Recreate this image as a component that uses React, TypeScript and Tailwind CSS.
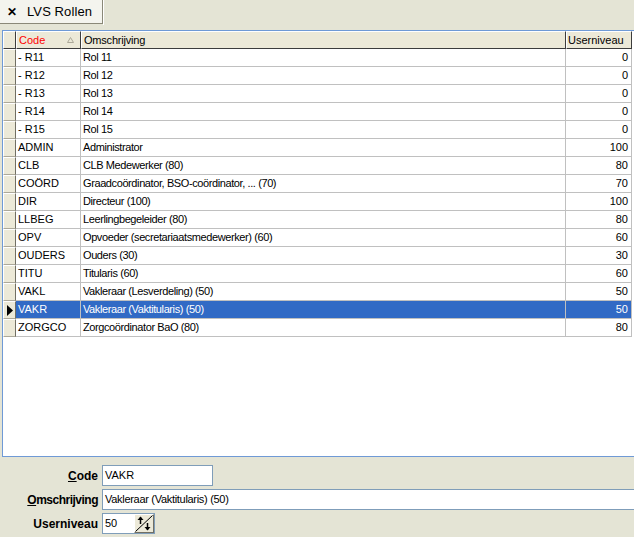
import React from "react";

const rows: [string, string, string][] = [
  ["- R11", "Rol 11", "0"],
  ["- R12", "Rol 12", "0"],
  ["- R13", "Rol 13", "0"],
  ["- R14", "Rol 14", "0"],
  ["- R15", "Rol 15", "0"],
  ["ADMIN", "Administrator", "100"],
  ["CLB", "CLB Medewerker (80)", "80"],
  ["COÖRD", "Graadcoördinator, BSO-coördinator, ... (70)", "70"],
  ["DIR", "Directeur (100)", "100"],
  ["LLBEG", "Leerlingbegeleider (80)", "80"],
  ["OPV", "Opvoeder (secretariaatsmedewerker) (60)", "60"],
  ["OUDERS", "Ouders (30)", "30"],
  ["TITU", "Titularis (60)", "60"],
  ["VAKL", "Vakleraar (Lesverdeling) (50)", "50"],
  ["VAKR", "Vakleraar (Vaktitularis) (50)", "50"],
  ["ZORGCO", "Zorgcoördinator BaO (80)", "80"],
];

const SEL = 14;

function Indicator({ selected }: { selected?: boolean }) {
  return (
    <div className="w-[13px] h-[18px] shrink-0 bg-[#ECE9D8] border-t border-l border-t-white border-l-white border-r border-b border-r-[#716F64] border-b-[#ACA899] flex items-center justify-center">
      {selected && (
        <svg width="6" height="11" viewBox="0 0 6 11">
          <path d="M0 0 L6 5.5 L0 11 Z" fill="#000" />
        </svg>
      )}
    </div>
  );
}

export default function App() {
  return (
    <div
      className="w-[634px] h-[537px] bg-[#E4E4D5] overflow-hidden flex flex-col text-[11px] text-black"
      style={{ fontFamily: '"Liberation Sans", Arial, sans-serif' }}
    >
      {/* Tab bar */}
      <div className="h-[30px] shrink-0 flex items-start">
        <div className="h-[24px] w-[103px] bg-[#F4F4EE] border-r border-b border-r-[#8A8878] border-b-[#8A8878] flex items-center pl-[7px] gap-[10px] text-[13px]">
          <span className="text-[12px] leading-none font-bold">✕</span>
          <span className="leading-none tracking-[0.1px]">LVS Rollen</span>
        </div>
        <div className="w-px h-[25px] bg-white" />
      </div>

      {/* Grid panel */}
      <div className="ml-[2px] h-[427px] shrink-0 border-t border-l border-b border-[#6F9AD6] bg-white flex flex-col overflow-hidden">
        {/* Header */}
        <div className="flex h-[18px] shrink-0">
          <div className="w-[13px] h-[18px] shrink-0 bg-[#ECE9D8] border-t border-l border-t-white border-l-white border-r border-b border-r-[#3C3C3C] border-b-[#3C3C3C]" />
          <div className="w-[65px] h-[18px] shrink-0 bg-[#ECE9D8] border-t border-l border-t-white border-l-white border-r border-b border-r-[#3C3C3C] border-b-[#3C3C3C] flex items-center pl-[2px] pr-[6px] justify-between">
            <span className="text-[#FF0000]">Code</span>
            <svg width="7" height="6" viewBox="0 0 7 6">
              <path d="M3.5 0.5 L6.5 5.5 L0.5 5.5 Z" fill="none" stroke="#ACA899" strokeWidth="1" />
            </svg>
          </div>
          <div className="w-[485px] h-[18px] shrink-0 bg-[#ECE9D8] border-t border-l border-t-white border-l-white border-r border-b border-r-[#3C3C3C] border-b-[#3C3C3C] flex items-center pl-[2px] tracking-[-0.2px]">
            Omschrijving
          </div>
          <div className="w-[66px] h-[18px] shrink-0 bg-[#ECE9D8] border-t border-l border-t-white border-l-white border-r border-b border-r-[#3C3C3C] border-b-[#3C3C3C] flex items-center pl-[1px]">
            Userniveau
          </div>
        </div>
        {rows.map((r, i) => {
          const sel = i === SEL;
          return (
            <div key={i} className="flex h-[18px] shrink-0">
              <Indicator selected={sel} />
              <div
                className={
                  sel
                    ? "flex flex-1 max-w-[616px] h-[18px] bg-[#316AC5] text-white border-b border-[#C0C0C0]"
                    : "flex flex-1 max-w-[616px] h-[18px] border-b border-[#C0C0C0]"
                }
              >
                <div className="w-[65px] shrink-0 h-[17px] border-r border-[#C0C0C0] flex items-center pl-[2px] whitespace-nowrap">
                  {r[0]}
                </div>
                <div className="w-[485px] shrink-0 h-[17px] border-r border-[#C0C0C0] flex items-center pl-[2px] whitespace-nowrap tracking-[-0.4px]">
                  {r[1]}
                </div>
                <div className="w-[66px] shrink-0 h-[17px] border-r border-[#C0C0C0] flex items-center justify-end pr-[3px]">
                  {r[2]}
                </div>
              </div>
            </div>
          );
        })}
      </div>

      {/* Form */}
      <div className="flex flex-col gap-[3px] pt-[8px] text-[12px]">
        <div className="flex items-center h-[21px]">
          <div className="w-[98px] text-right font-bold">
            <span className="underline">C</span>ode
          </div>
          <div className="ml-[4px] w-[111px] h-[21px] bg-white border border-[#7F9DB9] flex items-center pl-[2px] text-[11px]">
            VAKR
          </div>
        </div>
        <div className="flex items-center h-[21px]">
          <div className="w-[98px] text-right font-bold tracking-[-0.5px]">
            <span className="underline">O</span>mschrijving
          </div>
          <div className="ml-[4px] flex-1 h-[21px] bg-white border border-r-0 border-[#7F9DB9] flex items-center pl-[2px] text-[11px] tracking-[-0.3px]">
            Vakleraar (Vaktitularis) (50)
          </div>
        </div>
        <div className="flex items-center h-[21px]">
          <div className="w-[98px] text-right font-bold">Userniveau</div>
          <div className="ml-[4px] w-[53px] h-[21px] bg-white border border-[#7F9DB9] flex items-center text-[11px]">
            <div className="flex-1 pl-[2px]">50</div>
            <div className="w-[20px] h-[19px] bg-[#ECE9D8] border-l border-t border-l-white border-t-white border-r border-b border-r-[#716F64] border-b-[#716F64]">
              <svg width="18" height="17" viewBox="0 0 18 17">
                <path d="M0.5 16.5 L17.5 0.5" stroke="#000" strokeWidth="1" />
                <path d="M5.5 2.5 L5.5 9" stroke="#000" strokeWidth="1.5" />
                <path d="M2.5 5 L5.5 1.5 L8.5 5 Z" fill="#000" />
                <path d="M12.5 8 L12.5 14.5" stroke="#000" strokeWidth="1.5" />
                <path d="M9.5 12 L12.5 15.5 L15.5 12 Z" fill="#000" />
              </svg>
            </div>
          </div>
        </div>
      </div>
    </div>
  );
}
